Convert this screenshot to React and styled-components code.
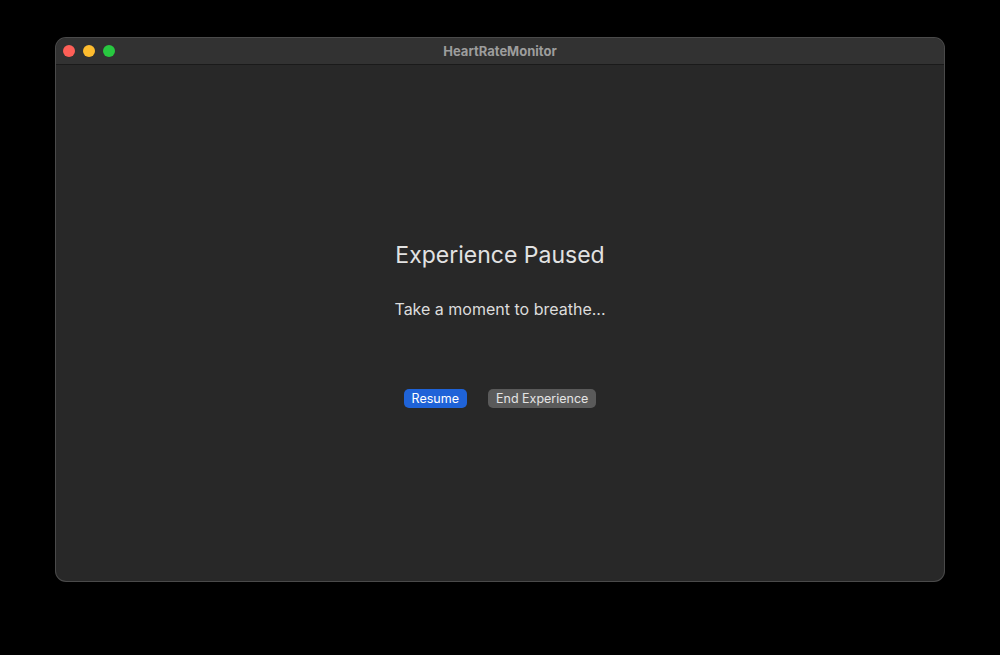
import styled, {createGlobalStyle} from 'styled-components'

const GlobalStyle = createGlobalStyle`
  html, body {
    margin: 0;
    padding: 0;
    background: #000;
  }
  body {
    font-family: "Inter", "Liberation Sans", sans-serif;
  }
`

export default function App() {
  return (
    <Page>
      <GlobalStyle />
      <Window>
        <TitleBar>
          <Lights>
            <Light color="#fe5f57" />
            <Light color="#febc2e" />
            <Light color="#28c840" />
          </Lights>
          <Title>HeartRateMonitor</Title>
        </TitleBar>
        <Content>
          <Heading>Experience Paused</Heading>
          <Subtitle>Take a moment to breathe...</Subtitle>
          <Buttons>
            <Button primary>Resume</Button>
            <Button>End Experience</Button>
          </Buttons>
        </Content>
      </Window>
    </Page>
  )
}

const Page = styled.div`
  width: 1000px;
  height: 655px;
  box-sizing: border-box;
  padding: 38px 56px 74px 56px;
  display: flex;
`

const Window = styled.div`
  flex: 1;
  display: flex;
  flex-direction: column;
  background: #282828;
  border-radius: 10px;
  overflow: hidden;
  box-shadow: 0 0 0 1px #4a4a4a;
`

const TitleBar = styled.div`
  height: 27px;
  flex-shrink: 0;
  position: relative;
  display: flex;
  align-items: center;
  justify-content: center;
  background: #323232;
  border-bottom: 1px solid #1a1a1a;
  box-sizing: border-box;
`

const Lights = styled.div`
  position: absolute;
  left: 7px;
  top: 7px;
  display: flex;
  gap: 8px;
`

const Light = styled.span`
  width: 12px;
  height: 12px;
  border-radius: 50%;
  background: ${p => p.color};
`

const Title = styled.div`
  font-family: "Inter", "Liberation Sans", sans-serif;
  font-size: 13px;
  font-weight: 700;
  color: #9d9d9d;
`

const Content = styled.div`
  flex: 1;
  display: flex;
  flex-direction: column;
  align-items: center;
  justify-content: center;
  padding-top: 3px;
`

const Heading = styled.h1`
  margin: 0;
  font-size: 23px;
  font-weight: 400;
  color: #e2e2e2;
  line-height: 28px;
`

const Subtitle = styled.p`
  margin: 29px 0 0 0;
  font-size: 16px;
  color: #dcdcdc;
  line-height: 22px;
`

const Buttons = styled.div`
  margin-top: 69px;
  display: flex;
  gap: 21px;
`

const Button = styled.button`
  height: 19px;
  padding: 0 8px;
  border: none;
  border-radius: 5px;
  font-family: "Inter", "Liberation Sans", sans-serif;
  font-size: 12.5px;
  line-height: 19px;
  color: ${p => (p.primary ? '#ffffff' : '#e4e4e4')};
  background: ${p => (p.primary ? '#1f63d8' : '#5a5a5a')};
`
